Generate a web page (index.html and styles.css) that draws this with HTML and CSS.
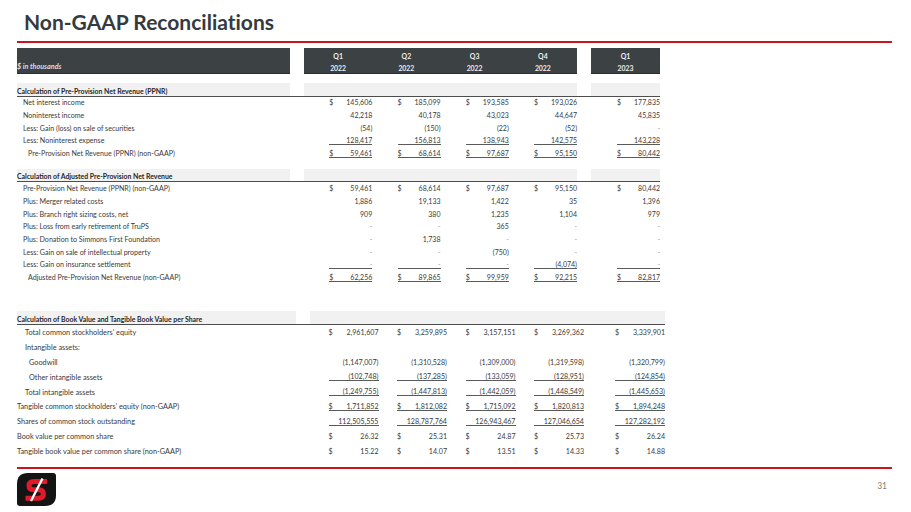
FILE: index.html
```html
<!DOCTYPE html>
<html>
<head>
<meta charset="utf-8">
<title>Non-GAAP Reconciliations</title>
<link rel="stylesheet" href="styles.css">
</head>
<body>
<div class="slide">
  <h1 class="title">Non-GAAP Reconciliations</h1>
  <div class="redrule"></div>

  <div class="hdr">
    <div class="lbl hbar hlbl"><span>$ in thousands</span></div>
    <div class="vals hbar hq">
      <div>Q1<br>2022</div><div>Q2<br>2022</div><div>Q3<br>2022</div><div>Q4<br>2022</div>
    </div>
    <div class="last hbar hq"><div>Q1<br>2023</div></div>
  </div>

  <div class="sec s1">
    <div class="row sh">
      <div class="lbl band">Calculation of Pre-Provision Net Revenue (PPNR)</div>
      <div class="vals band"></div>
      <div class="last band"></div>
    </div>
    <div class="row">
      <div class="lbl i1">Net interest income</div>
      <div class="vals">
        <span class="c"><span>$</span><span class="n">145,606</span></span>
        <span class="c"><span>$</span><span class="n">185,099</span></span>
        <span class="c"><span>$</span><span class="n">193,585</span></span>
        <span class="c"><span>$</span><span class="n">193,026</span></span>
      </div>
      <div class="last"><span class="c"><span>$</span><span class="n">177,835</span></span></div>
    </div>
    <div class="row">
      <div class="lbl i1">Noninterest income</div>
      <div class="vals">
        <span class="c"><span class="n">42,218</span></span>
        <span class="c"><span class="n">40,178</span></span>
        <span class="c"><span class="n">43,023</span></span>
        <span class="c"><span class="n">44,647</span></span>
      </div>
      <div class="last"><span class="c"><span class="n">45,835</span></span></div>
    </div>
    <div class="row">
      <div class="lbl i1">Less: Gain (loss) on sale of securities</div>
      <div class="vals">
        <span class="c"><span class="n">(54)</span></span>
        <span class="c"><span class="n">(150)</span></span>
        <span class="c"><span class="n">(22)</span></span>
        <span class="c"><span class="n">(52)</span></span>
      </div>
      <div class="last"><span class="c"><span class="n dash">-</span></span></div>
    </div>
    <div class="row">
      <div class="lbl i1">Less: Noninterest expense</div>
      <div class="vals">
        <span class="c u"><span class="n">128,417</span></span>
        <span class="c u"><span class="n">156,813</span></span>
        <span class="c u"><span class="n">138,943</span></span>
        <span class="c u"><span class="n">142,575</span></span>
      </div>
      <div class="last"><span class="c u"><span class="n">143,228</span></span></div>
    </div>
    <div class="row">
      <div class="lbl i2">Pre-Provision Net Revenue (PPNR) (non-GAAP)</div>
      <div class="vals">
        <span class="c u"><span>$</span><span class="n">59,461</span></span>
        <span class="c u"><span>$</span><span class="n">68,614</span></span>
        <span class="c u"><span>$</span><span class="n">97,687</span></span>
        <span class="c u"><span>$</span><span class="n">95,150</span></span>
      </div>
      <div class="last"><span class="c u"><span>$</span><span class="n">80,442</span></span></div>
    </div>
  </div>

  <div class="sec s2">
    <div class="row sh">
      <div class="lbl band">Calculation of Adjusted Pre-Provision Net Revenue</div>
      <div class="vals band"></div>
      <div class="last band"></div>
    </div>
    <div class="row">
      <div class="lbl i1">Pre-Provision Net Revenue (PPNR) (non-GAAP)</div>
      <div class="vals">
        <span class="c"><span>$</span><span class="n">59,461</span></span>
        <span class="c"><span>$</span><span class="n">68,614</span></span>
        <span class="c"><span>$</span><span class="n">97,687</span></span>
        <span class="c"><span>$</span><span class="n">95,150</span></span>
      </div>
      <div class="last"><span class="c"><span>$</span><span class="n">80,442</span></span></div>
    </div>
    <div class="row">
      <div class="lbl i1">Plus: Merger related costs</div>
      <div class="vals">
        <span class="c"><span class="n">1,886</span></span>
        <span class="c"><span class="n">19,133</span></span>
        <span class="c"><span class="n">1,422</span></span>
        <span class="c"><span class="n">35</span></span>
      </div>
      <div class="last"><span class="c"><span class="n">1,396</span></span></div>
    </div>
    <div class="row">
      <div class="lbl i1">Plus: Branch right sizing costs, net</div>
      <div class="vals">
        <span class="c"><span class="n">909</span></span>
        <span class="c"><span class="n">380</span></span>
        <span class="c"><span class="n">1,235</span></span>
        <span class="c"><span class="n">1,104</span></span>
      </div>
      <div class="last"><span class="c"><span class="n">979</span></span></div>
    </div>
    <div class="row">
      <div class="lbl i1">Plus: Loss from early retirement of TruPS</div>
      <div class="vals">
        <span class="c"><span class="n dash">-</span></span>
        <span class="c"><span class="n dash">-</span></span>
        <span class="c"><span class="n">365</span></span>
        <span class="c"><span class="n dash">-</span></span>
      </div>
      <div class="last"><span class="c"><span class="n dash">-</span></span></div>
    </div>
    <div class="row">
      <div class="lbl i1">Plus: Donation to Simmons First Foundation</div>
      <div class="vals">
        <span class="c"><span class="n dash">-</span></span>
        <span class="c"><span class="n">1,738</span></span>
        <span class="c"><span class="n dash">-</span></span>
        <span class="c"><span class="n dash">-</span></span>
      </div>
      <div class="last"><span class="c"><span class="n dash">-</span></span></div>
    </div>
    <div class="row">
      <div class="lbl i1">Less: Gain on sale of intellectual property</div>
      <div class="vals">
        <span class="c"><span class="n dash">-</span></span>
        <span class="c"><span class="n dash">-</span></span>
        <span class="c"><span class="n">(750)</span></span>
        <span class="c"><span class="n dash">-</span></span>
      </div>
      <div class="last"><span class="c"><span class="n dash">-</span></span></div>
    </div>
    <div class="row">
      <div class="lbl i1">Less: Gain on insurance settlement</div>
      <div class="vals">
        <span class="c u"><span class="n dash">-</span></span>
        <span class="c u"><span class="n dash">-</span></span>
        <span class="c u"><span class="n dash">-</span></span>
        <span class="c u"><span class="n">(4,074)</span></span>
      </div>
      <div class="last"><span class="c u"><span class="n dash">-</span></span></div>
    </div>
    <div class="row">
      <div class="lbl i2">Adjusted Pre-Provision Net Revenue (non-GAAP)</div>
      <div class="vals">
        <span class="c u"><span>$</span><span class="n">62,256</span></span>
        <span class="c u"><span>$</span><span class="n">89,865</span></span>
        <span class="c u"><span>$</span><span class="n">99,959</span></span>
        <span class="c u"><span>$</span><span class="n">92,215</span></span>
      </div>
      <div class="last"><span class="c u"><span>$</span><span class="n">82,817</span></span></div>
    </div>
  </div>

  <div class="sec s3">
    <div class="row sh">
      <div class="lbl band">Calculation of Book Value and Tangible Book Value per Share</div>
      <div class="vals band"></div>
    </div>
    <div class="row">
      <div class="lbl j1">Total common stockholders' equity</div>
      <div class="vals">
        <span class="c"><span>$</span><span class="n">2,961,607</span></span>
        <span class="c"><span>$</span><span class="n">3,259,895</span></span>
        <span class="c"><span>$</span><span class="n">3,157,151</span></span>
        <span class="c"><span>$</span><span class="n">3,269,362</span></span>
        <span class="c"><span>$</span><span class="n">3,339,901</span></span>
      </div>
    </div>
    <div class="row">
      <div class="lbl j1">Intangible assets:</div>
      <div class="vals"></div>
    </div>
    <div class="row">
      <div class="lbl j2">Goodwill</div>
      <div class="vals">
        <span class="c"><span class="n">(1,147,007)</span></span>
        <span class="c"><span class="n">(1,310,528)</span></span>
        <span class="c"><span class="n">(1,309,000)</span></span>
        <span class="c"><span class="n">(1,319,598)</span></span>
        <span class="c"><span class="n">(1,320,799)</span></span>
      </div>
    </div>
    <div class="row">
      <div class="lbl j2">Other intangible assets</div>
      <div class="vals">
        <span class="c u"><span class="n">(102,748)</span></span>
        <span class="c u"><span class="n">(137,285)</span></span>
        <span class="c u"><span class="n">(133,059)</span></span>
        <span class="c u"><span class="n">(128,951)</span></span>
        <span class="c u"><span class="n">(124,854)</span></span>
      </div>
    </div>
    <div class="row">
      <div class="lbl j1">Total intangible assets</div>
      <div class="vals">
        <span class="c u"><span class="n">(1,249,755)</span></span>
        <span class="c u"><span class="n">(1,447,813)</span></span>
        <span class="c u"><span class="n">(1,442,059)</span></span>
        <span class="c u"><span class="n">(1,448,549)</span></span>
        <span class="c u"><span class="n">(1,445,653)</span></span>
      </div>
    </div>
    <div class="row">
      <div class="lbl">Tangible common stockholders' equity (non-GAAP)</div>
      <div class="vals">
        <span class="c u"><span>$</span><span class="n">1,711,852</span></span>
        <span class="c u"><span>$</span><span class="n">1,812,082</span></span>
        <span class="c u"><span>$</span><span class="n">1,715,092</span></span>
        <span class="c u"><span>$</span><span class="n">1,820,813</span></span>
        <span class="c u"><span>$</span><span class="n">1,894,248</span></span>
      </div>
    </div>
    <div class="row">
      <div class="lbl">Shares of common stock outstanding</div>
      <div class="vals">
        <span class="c u"><span class="n">112,505,555</span></span>
        <span class="c u"><span class="n">128,787,764</span></span>
        <span class="c u"><span class="n">126,943,467</span></span>
        <span class="c u"><span class="n">127,046,654</span></span>
        <span class="c u"><span class="n">127,282,192</span></span>
      </div>
    </div>
    <div class="row">
      <div class="lbl">Book value per common share</div>
      <div class="vals">
        <span class="c"><span>$</span><span class="n">26.32</span></span>
        <span class="c"><span>$</span><span class="n">25.31</span></span>
        <span class="c"><span>$</span><span class="n">24.87</span></span>
        <span class="c"><span>$</span><span class="n">25.73</span></span>
        <span class="c"><span>$</span><span class="n">26.24</span></span>
      </div>
    </div>
    <div class="row">
      <div class="lbl">Tangible book value per common share (non-GAAP)</div>
      <div class="vals">
        <span class="c"><span>$</span><span class="n">15.22</span></span>
        <span class="c"><span>$</span><span class="n">14.07</span></span>
        <span class="c"><span>$</span><span class="n">13.51</span></span>
        <span class="c"><span>$</span><span class="n">14.33</span></span>
        <span class="c"><span>$</span><span class="n">14.88</span></span>
      </div>
    </div>
  </div>

  <div class="redrule bottom"></div>
  <div class="foot">
    <svg class="logo" viewBox="0 0 39 33" width="39" height="33" aria-label="Simmons Bank">
      <path d="M11 0H36Q39 0 39 3V22Q39 33 28 33H3Q0 33 0 30V11Q0 0 11 0Z" fill="#141414"/>
      <path d="M30 8.6H16.8Q12 8.6 12 12.8Q12 16.8 16.8 16.8H21.6Q26.4 16.8 26.4 21Q26.4 25.2 21.6 25.2H8.5" fill="none" stroke="#e0192b" stroke-width="5" stroke-linejoin="round"/>
      <path d="M25.5 5.5L14 28" stroke="#fff" stroke-width="2.3"/>
    </svg>
    <span class="pg">31</span>
  </div>
</div>
</body>
</html>
```

FILE: styles.css
```css
* {
  box-sizing: border-box;
  margin: 0;
  padding: 0;
}

body {
  margin: 0;
  background: #ffffff;
  font-family: Lato, "Open Sans", sans-serif;
  color: #3a3a3a;
}

.slide {
  width: 911px;
  height: 512px;
  padding-left: 17px;
  overflow: hidden;
}

.title {
  font-size: 21px;
  font-weight: 700;
  line-height: 25px;
  color: #343a3d;
  margin: 9px 0 7px 7px;
  font-variant-ligatures: none;
}

.redrule {
  width: 875px;
  height: 2px;
  background: #d0121b;
}

.redrule.bottom {
  margin-top: 8.2px;
}

/* column header bar */
.hdr {
  display: flex;
  margin-top: 5px;
  height: 26px;
}

.hbar {
  background: #3c4144;
  color: #eceeee;
  font-weight: 700;
  font-size: 6.9px;
  height: 26px;
  border-bottom: 1px solid #2a2e30;
}

.hlbl {
  display: flex;
  align-items: flex-end;
  padding-bottom: 1px;
  line-height: 10px;
  font-style: italic;
  font-size: 7.2px;
  color: #dcdcdc;
}

.hq > div {
  text-align: center;
  line-height: 12px;
  padding-top: 1.5px;
}

.last.hq {
  display: block;
}

/* column layout */
.lbl {
  width: 273px;
  flex: none;
  white-space: nowrap;
}

.vals {
  width: 273px;
  margin-left: 14px;
  flex: none;
  display: grid;
  grid-template-columns: repeat(4, 1fr);
}

.last {
  width: 69px;
  margin-left: 14px;
  flex: none;
  display: flex;
  justify-content: flex-end;
}

/* sections */
.s1 { margin-top: 9px; }
.s2 { margin-top: 9px; }
.s3 { margin-top: 27px; }

.row {
  display: flex;
  align-items: center;
  height: 12.7px;
  font-size: 7.1px;
}

.row.sh {
  height: 13.5px;
  align-items: stretch;
  border-bottom: 1.5px solid #4d4d4d;
  width: 643px;
}

.band {
  background: #f1f1f1;
}

.lbl.band {
  display: flex;
  align-items: flex-end;
  font-weight: 700;
  font-size: 6.9px;
  line-height: 9px;
  color: #262626;
}

.i1 { padding-left: 6px; }
.i2 { padding-left: 11px; }
.j1 { padding-left: 8px; }
.j2 { padding-left: 12px; }

/* value cells */
.c {
  display: flex;
  width: 43px;
  justify-self: end;
  line-height: 7px;
  font-size: 7px;
}

.c .n {
  margin-left: auto;
}

.c.u {
  border-bottom: 1px solid #5a5a5a;
}

.dash {
  color: #9a9a9a;
}

/* section 3 has its own grid */
.s3 .row {
  height: 14.8px;
  font-size: 7.3px;
}

.s3 .row.sh {
  height: 14.5px;
  width: 648px;
}

.s3 .lbl {
  width: 279px;
}

.s3 .vals {
  width: 355px;
  grid-template-columns: repeat(4, 68.5px) 81px;
}

.s3 .c {
  width: 50px;
  font-size: 7.1px;
}

/* footer */
.foot {
  display: flex;
  justify-content: space-between;
  align-items: flex-start;
  width: 875px;
  height: 33px;
  margin-top: 4px;
}

.logo {
  display: block;
}

.pg {
  font-size: 8.5px;
  line-height: 10px;
  color: #808080;
  margin-top: 8px;
  padding-right: 5px;
}
```
